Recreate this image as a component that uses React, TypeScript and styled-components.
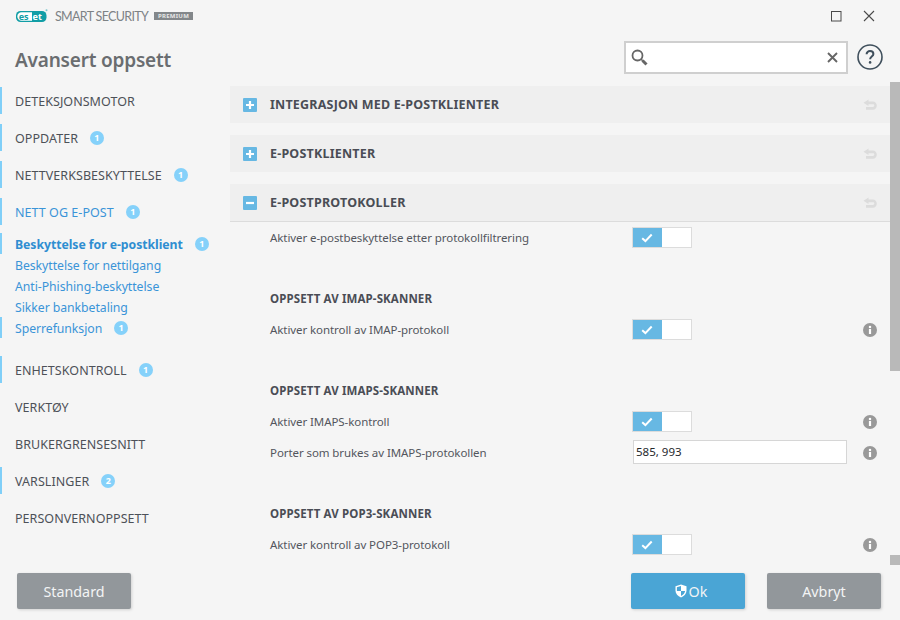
import React from 'react'
import styled, { createGlobalStyle } from 'styled-components'

const GlobalStyle = createGlobalStyle`
  html, body {
    margin: 0;
    padding: 0;
    background: #f5f5f5;
  }

  body {
    font-family: "Noto Sans", "Open Sans", "Liberation Sans", sans-serif;
    color: #4a4f57;
  }
`

const Window = styled.div`
  width: 900px;
  height: 620px;
  display: flex;
  flex-direction: column;
  overflow: hidden;
  background: #f5f5f5;
`

const TitleBar = styled.div`
  height: 32px;
  display: flex;
  align-items: center;
  padding-left: 16px;
  flex-shrink: 0;
`

const ProductName = styled.span`
  margin-left: 7px;
  font-family: Lato, "Noto Sans", sans-serif;
  font-size: 12.5px;
  letter-spacing: -0.67px;
  color: #7d8285;
`

const Edition = styled.span`
  margin-left: 6px;
  height: 8px;
  padding: 0 4px;
  display: flex;
  align-items: center;
  background: #83878a;
  color: #e6e6e6;
  font-size: 6px;
  font-weight: 700;
  letter-spacing: 0.25px;
`

const WindowButtons = styled.div`
  margin-left: auto;
  display: flex;
  align-items: center;
  gap: 21px;
  padding-right: 25px;
`

const HeaderRow = styled.div`
  height: 50px;
  display: flex;
  align-items: center;
  flex-shrink: 0;
  padding: 0 17px 0 15px;
`

const PageTitle = styled.h1`
  margin: 5px 0 0;
  font-size: 19px;
  font-weight: 600;
  color: #6a6d70;
  letter-spacing: -0.2px;
`

const SearchBox = styled.div`
  margin-left: auto;
  width: 224px;
  height: 33px;
  box-sizing: border-box;
  display: flex;
  align-items: center;
  justify-content: space-between;
  padding: 0 8px 0 5px;
  background: #fff;
  border: 2px solid #cfcfcf;
`

const HelpButton = styled.div`
  margin-left: 9px;
  width: 26px;
  height: 26px;
  display: flex;
`

const Body = styled.div`
  flex: 1;
  min-height: 0;
  display: flex;
`

const Sidebar = styled.nav`
  width: 230px;
  flex-shrink: 0;
  padding-top: 5px;
  box-sizing: border-box;
`

const NavItem = styled.div<{ $marked?: boolean; $active?: boolean }>`
  height: 27px;
  box-sizing: border-box;
  margin-bottom: 10px;
  padding: 2px 0 0 13px;
  display: flex;
  align-items: center;
  font-size: 12.5px;
  letter-spacing: 0.05px;
  color: ${(p) => (p.$active ? '#3a94d8' : '#4d5158')};
  border-left: 2px solid ${(p) => (p.$marked ? '#80cff8' : 'transparent')};
`

const SubNav = styled.div`
  margin-top: -2px;
  margin-bottom: 18px;
`

const SubItem = styled.div<{ $marked?: boolean; $current?: boolean }>`
  height: 21px;
  box-sizing: border-box;
  padding: 2px 0 0 13px;
  display: flex;
  align-items: center;
  font-size: 12.25px;
  letter-spacing: -0.05px;
  font-weight: ${(p) => (p.$current ? 700 : 400)};
  color: ${(p) => (p.$current ? '#2f8ed1' : '#3a94d8')};
  border-left: 2px solid ${(p) => (p.$marked ? '#80cff8' : 'transparent')};
`

const Badge = styled.span`
  margin-left: 12px;
  margin-top: -2px;
  width: 14px;
  height: 14px;
  border-radius: 50%;
  background: #85d1fa;
  color: #fff;
  font-size: 9px;
  font-weight: 700;
  line-height: 14px;
  text-align: center;
`

const Main = styled.main`
  flex: 1;
  min-width: 0;
  display: flex;
`

const Content = styled.div`
  flex: 1;
  min-width: 0;
  padding-top: 4px;
  overflow: hidden;
`

const Scrollbar = styled.div`
  width: 10px;
  flex-shrink: 0;
  display: flex;
  flex-direction: column;
  justify-content: space-between;
`

const ScrollThumb = styled.div`
  height: 289px;
  background: #b9b9b9;
`

const ScrollEnd = styled.div`
  height: 10px;
  background: #b9b9b9;
  margin-bottom: 8px;
`

const SectionHeader = styled.div<{ $open?: boolean }>`
  height: 37px;
  margin-bottom: ${(p) => (p.$open ? 0 : 12)}px;
  box-sizing: ${(p) => (p.$open ? 'content-box' : 'border-box')};
  display: flex;
  align-items: center;
  padding: 0 13px;
  background: #efefef;
  border-bottom: ${(p) => (p.$open ? '1px solid #dcdcdc' : 'none')};
`

const ToggleBox = styled.div`
  width: 14px;
  height: 14px;
  margin-right: 13px;
  display: flex;
  border-radius: 1px;
  background: #67b8e3;
`

const SectionTitle = styled.span`
  font-size: 12.5px;
  font-weight: 700;
  letter-spacing: 0.2px;
  color: #4a4d55;
`

const ResetIcon = styled.span`
  margin-left: auto;
  display: flex;
`

const SubHeading = styled.div`
  height: 31px;
  margin-top: 30px;
  padding-left: 40px;
  display: flex;
  align-items: center;
  font-size: 11.5px;
  font-weight: 700;
  letter-spacing: 0.12px;
  color: #4a4d55;
`

const Row = styled.div`
  height: 31px;
  padding: 0 13px 0 40px;
  display: grid;
  grid-template-columns: 362px 215px 1fr;
  align-items: center;
`

const RowLabel = styled.span`
  font-size: 11.5px;
  letter-spacing: -0.08px;
  color: #53565d;
`

const Switch = styled.div`
  width: 60px;
  height: 21px;
  box-sizing: border-box;
  display: flex;
  background: #fff;
  border: 1px solid #dcdcdc;
`

const SwitchOn = styled.div`
  width: 29px;
  padding-right: 2px;
  box-sizing: border-box;
  display: flex;
  align-items: center;
  justify-content: center;
  background: #67b8e3;
`

const TextField = styled.div`
  width: 214px;
  height: 24px;
  margin: -2px 0 0 1px;
  box-sizing: border-box;
  padding-left: 2px;
  display: flex;
  align-items: center;
  font-size: 11.5px;
  color: #26282c;
  background: #fff;
  border: 1px solid #d6d6d6;
`

const InfoSlot = styled.span`
  display: flex;
  justify-content: flex-end;
`

const Footer = styled.div`
  height: 47px;
  box-sizing: border-box;
  padding: 0 19px 11px 17px;
  display: flex;
  align-items: center;
  flex-shrink: 0;
`

const Button = styled.button<{ $primary?: boolean }>`
  width: 114px;
  height: 36px;
  padding: ${(p) => (p.$primary ? '0 0 0 6px' : '0')};
  border: none;
  border-radius: 2px;
  display: flex;
  align-items: center;
  justify-content: center;
  gap: 2px;
  font-family: inherit;
  font-size: 14.3px;
  color: #f2f4f5;
  background: ${(p) => (p.$primary ? '#4aa5d5' : '#92979b')};
  box-shadow: 1px 1px 3px rgba(0, 0, 0, 0.15);
  margin-left: ${(p) => (p.$primary ? 'auto' : '0')};
`

const CancelSlot = styled.div`
  margin-left: 22px;
`

const EsetLogo = () => (
  <svg width="32" height="14" viewBox="0 0 32 14">
    <rect x="0" y="2" width="30.5" height="11" rx="4.500" fill="#119ea6" />
    <path d="M5.500 3.300h10.500v8.400H5.500a4.200 4.200 0 0 1 0-8.400z" fill="#fff" />
    <text x="2.700" y="10.600" fontSize="9" fontWeight="700" fill="#119ea6" fontFamily="Noto Sans, sans-serif">es</text>
    <text x="16.600" y="10.600" fontSize="9" fontWeight="700" fill="#fff" fontFamily="Noto Sans, sans-serif">et</text>
    <circle cx="30.500" cy="1.300" r="1" fill="#7cc6ca" />
  </svg>
)

const MaximizeIcon = () => (
  <svg width="11" height="11" viewBox="0 0 11 11">
    <rect x="0.5" y="0.5" width="9.5" height="9.5" fill="none" stroke="#4a4a4a" />
  </svg>
)

const CloseIcon = () => (
  <svg width="12" height="12" viewBox="0 0 12 12">
    <path d="M1 1l10 10M11 1L1 11" stroke="#4a4a4a" strokeWidth="1.1" fill="none" />
  </svg>
)

const SearchIcon = () => (
  <svg width="17" height="17" viewBox="0 0 17 17">
    <circle cx="6.500" cy="6.500" r="5" fill="none" stroke="#666" strokeWidth="1.8" />
    <path d="M10.200 10.200l1.500 1.500" stroke="#666" strokeWidth="1.6" fill="none" />
    <path d="M11.500 11.500l4 4" stroke="#666" strokeWidth="3" fill="none" />
  </svg>
)

const ClearIcon = () => (
  <svg width="11" height="11" viewBox="0 0 11 11">
    <path d="M1 1l9 9M10 1l-9 9" stroke="#666" strokeWidth="1.9" fill="none" />
  </svg>
)

const HelpIcon = () => (
  <svg width="26" height="26" viewBox="0 0 26 26">
    <circle cx="13" cy="13" r="12" fill="none" stroke="#3f4f5c" strokeWidth="1.6" />
    <path d="M9.600 10.200c0-2 1.500-3.100 3.400-3.100s3.400 1.100 3.400 2.900c0 2.600-3.300 2.500-3.300 5.200" fill="none" stroke="#3f4f5c" strokeWidth="2" />
    <circle cx="13.100" cy="18.400" r="1.300" fill="#3f4f5c" />
  </svg>
)

const PlusIcon = () => (
  <svg width="14" height="14" viewBox="0 0 14 14">
    <path d="M3 7h8M7 3v8" stroke="#fff" strokeWidth="2.200" fill="none" />
  </svg>
)

const MinusIcon = () => (
  <svg width="14" height="14" viewBox="0 0 14 14">
    <path d="M3 7h8" stroke="#fff" strokeWidth="2.200" fill="none" />
  </svg>
)

const UndoIcon = () => (
  <svg width="14" height="12" viewBox="0 0 14 12">
    <path d="M5.500 0.500L0.500 3.800l5 3.300V5.200h4.300c1 0 1.500 0.500 1.500 1.400s-0.500 1.400-1.500 1.400H3v2.800h6.800c2.400 0 4-1.700 4-4.200s-1.600-4.200-4-4.200H5.500z" fill="#dcdcdc" />
  </svg>
)

const CheckIcon = () => (
  <svg width="12" height="10" viewBox="0 0 12 10">
    <path d="M1.200 5.200l3.200 2.900 6.300-6.600" stroke="#fff" strokeWidth="2" fill="none" />
  </svg>
)

const InfoIcon = () => (
  <svg width="14" height="14" viewBox="0 0 14 14">
    <circle cx="7" cy="7" r="7" fill="#999" />
    <rect x="5.900" y="6" width="2.200" height="5" fill="#fff" />
    <circle cx="7" cy="3.900" r="1.250" fill="#fff" />
  </svg>
)

const ShieldIcon = () => (
  <svg width="12" height="14" viewBox="0 0 12 14">
    <path d="M6 0.500l5.500 1.800v4.200c0 3.200-2.300 5.700-5.500 7-3.200-1.300-5.500-3.800-5.500-7V2.300z" fill="#fff" />
    <path d="M6 2v5H1.900V3.300zM6 7h4.100c-0.300 2.200-1.900 3.900-4.100 5z" fill="#4aa5d5" />
  </svg>
)

const Toggle = () => (
  <Switch>
    <SwitchOn>
      <CheckIcon />
    </SwitchOn>
  </Switch>
)

type SettingProps = {
  label: string,
  info?: boolean,
  children: React.ReactNode
}

const Setting = ({ label, info, children }: SettingProps) => (
  <Row>
    <RowLabel>{label}</RowLabel>
    {children}
    {info && <InfoSlot><InfoIcon /></InfoSlot>}
  </Row>
)

const Section = ({ title, open }: { title: string, open?: boolean }) => (
  <SectionHeader $open={open}>
    <ToggleBox>{open ? <MinusIcon /> : <PlusIcon />}</ToggleBox>
    <SectionTitle>{title}</SectionTitle>
    <ResetIcon><UndoIcon /></ResetIcon>
  </SectionHeader>
)

export default function App () {
  return (
    <Window>
      <GlobalStyle />
      <TitleBar>
        <EsetLogo />
        <ProductName>SMART SECURITY</ProductName>
        <Edition>PREMIUM</Edition>
        <WindowButtons>
          <MaximizeIcon />
          <CloseIcon />
        </WindowButtons>
      </TitleBar>

      <HeaderRow>
        <PageTitle>Avansert oppsett</PageTitle>
        <SearchBox>
          <SearchIcon />
          <ClearIcon />
        </SearchBox>
        <HelpButton><HelpIcon /></HelpButton>
      </HeaderRow>

      <Body>
        <Sidebar>
          <NavItem $marked>DETEKSJONSMOTOR</NavItem>
          <NavItem $marked>OPPDATER<Badge>1</Badge></NavItem>
          <NavItem $marked>NETTVERKSBESKYTTELSE<Badge>1</Badge></NavItem>
          <NavItem $marked $active>NETT OG E-POST<Badge>1</Badge></NavItem>
          <SubNav>
            <SubItem $marked $current>Beskyttelse for e-postklient<Badge>1</Badge></SubItem>
            <SubItem>Beskyttelse for nettilgang</SubItem>
            <SubItem>Anti-Phishing-beskyttelse</SubItem>
            <SubItem>Sikker bankbetaling</SubItem>
            <SubItem $marked>Sperrefunksjon<Badge>1</Badge></SubItem>
          </SubNav>
          <NavItem $marked>ENHETSKONTROLL<Badge>1</Badge></NavItem>
          <NavItem>VERKTØY</NavItem>
          <NavItem>BRUKERGRENSESNITT</NavItem>
          <NavItem $marked>VARSLINGER<Badge>2</Badge></NavItem>
          <NavItem>PERSONVERNOPPSETT</NavItem>
        </Sidebar>

        <Main>
          <Content>
            <Section title="INTEGRASJON MED E-POSTKLIENTER" />
            <Section title="E-POSTKLIENTER" />
            <Section title="E-POSTPROTOKOLLER" open />
            <Setting label="Aktiver e-postbeskyttelse etter protokollfiltrering"><Toggle /></Setting>

            <SubHeading>OPPSETT AV IMAP-SKANNER</SubHeading>
            <Setting label="Aktiver kontroll av IMAP-protokoll" info><Toggle /></Setting>

            <SubHeading>OPPSETT AV IMAPS-SKANNER</SubHeading>
            <Setting label="Aktiver IMAPS-kontroll" info><Toggle /></Setting>
            <Setting label="Porter som brukes av IMAPS-protokollen" info><TextField>585, 993</TextField></Setting>

            <SubHeading>OPPSETT AV POP3-SKANNER</SubHeading>
            <Setting label="Aktiver kontroll av POP3-protokoll" info><Toggle /></Setting>
          </Content>
          <Scrollbar>
            <ScrollThumb />
            <ScrollEnd />
          </Scrollbar>
        </Main>
      </Body>

      <Footer>
        <Button>Standard</Button>
        <Button $primary><ShieldIcon />Ok</Button>
        <CancelSlot><Button>Avbryt</Button></CancelSlot>
      </Footer>
    </Window>
  )
}
